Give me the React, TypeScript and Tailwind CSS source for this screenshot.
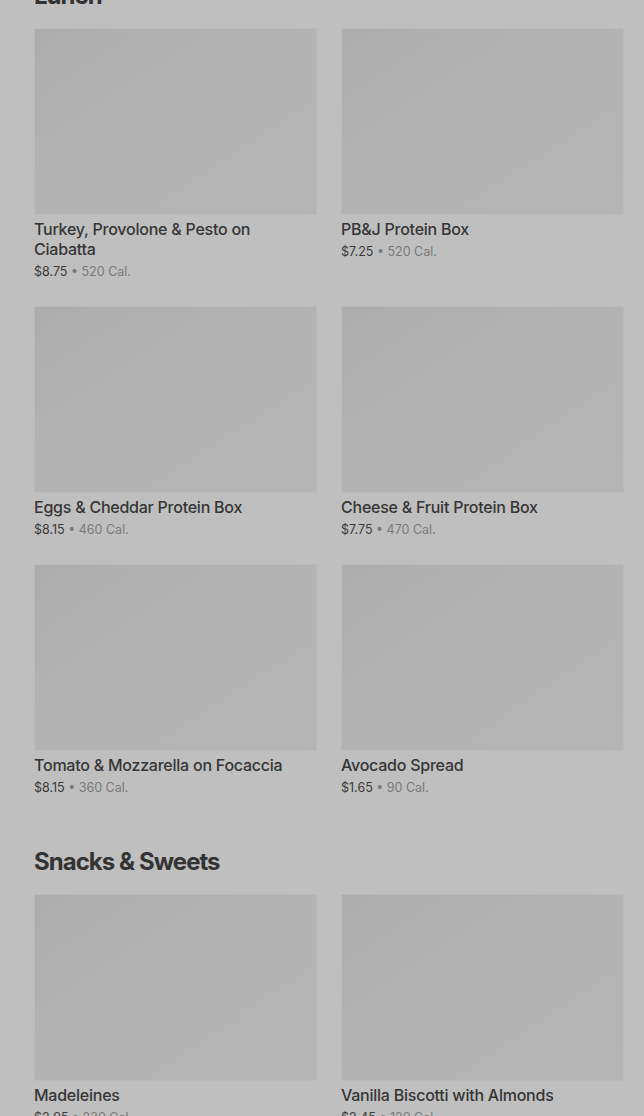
const lunch = [
  { name: "Turkey, Provolone & Pesto on Ciabatta", price: "$8.75", cal: "520 Cal." },
  { name: "PB&J Protein Box", price: "$7.25", cal: "520 Cal." },
  { name: "Eggs & Cheddar Protein Box", price: "$8.15", cal: "460 Cal." },
  { name: "Cheese & Fruit Protein Box", price: "$7.75", cal: "470 Cal." },
  { name: "Tomato & Mozzarella on Focaccia", price: "$8.15", cal: "360 Cal." },
  { name: "Avocado Spread", price: "$1.65", cal: "90 Cal." },
];

const snacks = [
  { name: "Madeleines", price: "$2.95", cal: "230 Cal." },
  { name: "Vanilla Biscotti with Almonds", price: "$2.45", cal: "120 Cal." },
];

type Item = { name: string; price: string; cal: string };

function ItemCard({ item }: { item: Item }) {
  return (
    <div>
      <div className="h-[187px] border border-[#bababa] bg-gradient-to-br from-[#adadad] via-[#b3b3b3] to-[#b5b5b5]" />
      <div className="mt-1 pr-6 text-[16px] leading-5 font-medium tracking-[-0.015em] text-[#363636]">{item.name}</div>
      <div className="mt-[3px] text-[12.5px] leading-5 text-[#7a7a7a]">
        <span className="text-[#3a3a3a]">{item.price}</span> • {item.cal}
      </div>
    </div>
  );
}

function Section({ title, items }: { title: string; items: Item[] }) {
  return (
    <section>
      <h2 className="mb-4 text-[24px] leading-8 font-bold tracking-[-0.04em] text-[#333333]">{title}</h2>
      <div className="grid grid-cols-2 gap-6">
        {items.map((it) => (
          <ItemCard key={it.name} item={it} />
        ))}
      </div>
    </section>
  );
}

export default function App() {
  return (
    <div
      className="h-[1116px] overflow-hidden bg-[#bfbfbf]"
      style={{ fontFamily: "Inter, 'Noto Sans', sans-serif" }}
    >
      <div className="-mt-[20px] pl-[34px] pr-[20px] flex flex-col gap-12">
        <Section title="Lunch" items={lunch} />
        <Section title="Snacks & Sweets" items={snacks} />
      </div>
    </div>
  );
}
